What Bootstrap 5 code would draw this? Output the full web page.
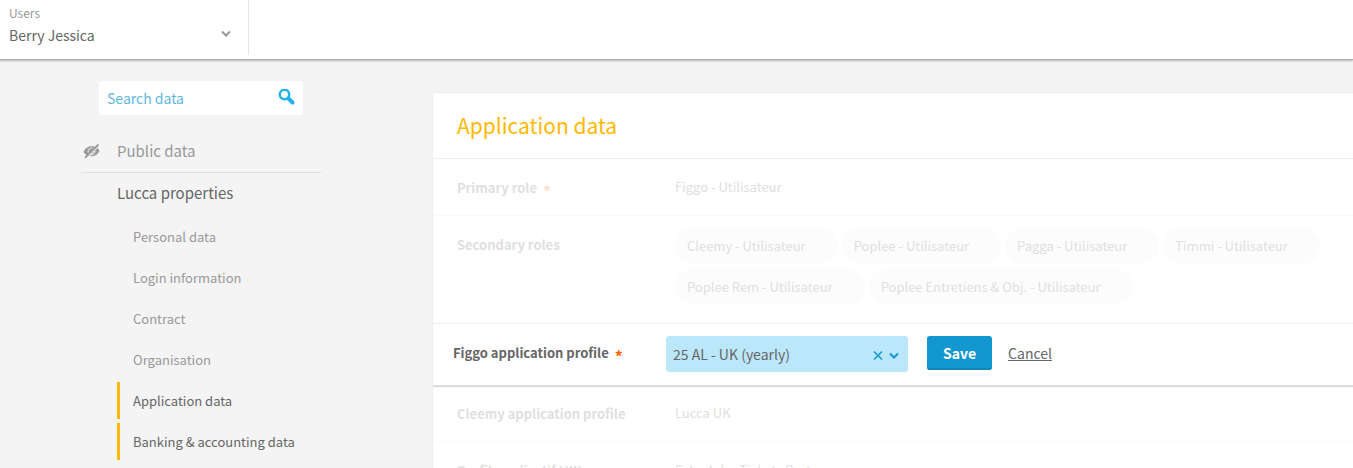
<!DOCTYPE html>
<html lang="en">
<head>
<meta charset="utf-8">
<meta name="viewport" content="width=device-width, initial-scale=1">
<title>Berry Jessica – Application data</title>
<link href="https://cdn.jsdelivr.net/npm/bootstrap@5.3.0/dist/css/bootstrap.min.css" rel="stylesheet">
<style>
  :root { --ink: #666; --muted: #999; --accent: #ffb800; --blue: #1297d1; }
  body { background: #f4f4f4; color: var(--ink); font-family: "Noto Sans CJK JP", "Noto Sans", sans-serif; font-size: 14px; line-height: 20px; overflow: hidden; height: 100vh; }
  .topbar { background: #fff; border-bottom: 1px solid #aaa; box-shadow: 0 1px 2px rgba(0,0,0,.25); height: 60px; }
  .user-pick { width: 249px; height: 55px; border-right: 1px solid #e6e6e6; padding: 3px 16px 0 9px; background: #fff; color: var(--ink); text-align: left; }
  .user-pick .caption { font-size: 12px; color: var(--muted); line-height: 20px; }
  .user-pick .who { line-height: 24px; }
  .sidebar { flex: 0 0 32%; padding: 21px 112px 0 81px; }
  .search-box { background: #fff; border-radius: 3px; height: 34px; margin: 0 18px; padding: 0 8px; }
  .search-box input { border: 0; outline: 0; background: none; min-width: 0; color: var(--ink); padding: 0; }
  .search-box input::placeholder { color: #5db8dd; opacity: 1; }
  .group-link { display: flex; align-items: center; height: 42px; padding: 0 0 2px 36px; font-size: 15px; color: var(--ink); text-decoration: none; }
  .group-link.hidden-group { color: var(--muted); padding-left: 2px; gap: 17px; border-bottom: 1px solid #ddd; }
  .sub-link { display: flex; align-items: center; height: 37px; margin: 0 0 4px 36px; padding-left: 13px; border-left: 3px solid transparent; font-size: 13px; color: var(--muted); text-decoration: none; }
  .sub-list { padding-top: 3px; }
  .sub-link.current { border-color: var(--accent); color: var(--ink); }
  .panel { background: #fff; border: 1px solid #eee; border-right: 0; border-bottom: 0; border-radius: 4px 0 0 0; margin-top: 32px; margin-left: -1px; }
  .panel h1 { color: var(--accent); font-size: 21px; line-height: 32px; padding: 16px 24px 17px; border-bottom: 1px solid #eee; margin: 0; font-weight: 400; }
  .field-row { display: flex; padding: 0 24px; font-size: 13px; border-bottom: 1px solid #fafafa; min-height: 57px; color: #e0e0e0; }
  .field-row dt { flex: 0 0 218px; padding-top: 19px; }
  .field-row dd { margin: 0; padding-top: 18px; }
  .req { display: inline-block; font-size: 16px; line-height: 16px; height: 12px; vertical-align: middle; margin-left: 3px; color: #ff6400; }
  .field-row dt .req { color: #ffdfcc; }
  .pills { display: flex; flex-wrap: wrap; gap: 5px 4px; padding-bottom: 18px; }
  .pill { background: #fcfcfc; border-radius: 18px; height: 36px; line-height: 36px; padding: 0 32px 0 12px; }
  .edit-row { display: flex; align-items: flex-start; height: 62px; padding: 12px 20px 0; border-top: 1px solid #eee; box-shadow: 0 2px 1px #ddd; position: relative; }
  .edit-row label { flex: 0 0 213px; font-size: 13px; font-weight: 700; padding-top: 7px; }
  .combo { width: 242px; height: 36px; background: #bbe7fb; border-radius: 3px; padding: 0 8px 0 7px; }
  .combo input { border: 0; outline: 0; background: none; min-width: 0; padding: 0; color: var(--ink); }
  .bare { border: 0; background: none; padding: 0; display: flex; }
  .btn-save { background: var(--blue); color: #fff; border: 0; border-radius: 3px; box-shadow: inset 0 -2px #0f88bd; font-size: 14px; font-weight: 700; line-height: 20px; padding: 7px 16px; margin-left: 19px; }
  .cancel { color: var(--ink); margin: 7px 0 0 16px; }
</style>
</head>
<body>
<header class="topbar">
  <button class="user-pick d-flex justify-content-between border-top-0 border-start-0 border-bottom-0" type="button">
    <span><span class="caption d-block">Users</span><span class="who d-block">Berry Jessica</span></span>
    <svg class="mt-4" width="12" height="14" viewBox="0 0 12 14" fill="none" stroke="#999" stroke-width="2" aria-hidden="true"><path d="M2 4.500l4 4 4-4"/></svg>
  </button>
</header>
<div class="d-flex">
  <nav class="sidebar" aria-label="Data sections">
    <div class="search-box d-flex align-items-center">
      <input class="flex-grow-1" type="text" placeholder="Search data" aria-label="Search data">
      <button class="bare" type="button" aria-label="Search">
        <svg width="18" height="18" viewBox="0 0 18 18" fill="none" stroke="#22b2f0" aria-hidden="true"><circle cx="7.500" cy="5.500" r="4.700" stroke-width="2.500"/><path d="M11.500 9.500l4 4" stroke-width="4" stroke-linecap="round"/></svg>
      </button>
    </div>
    <a class="group-link hidden-group mt-3" href="#">
      <svg width="17" height="16" viewBox="0 0 17 16" fill="none" stroke="#999" aria-hidden="true"><path d="M.5 9C3 1.500 13.500 1.500 16.500 7.500 14 15 3.500 15 .5 9z" fill="#999" stroke="none"/><path d="M5.200 9.500c-.5-3 1.500-4.800 4-4.500M11.800 7.500c.3 2.500-1.500 4.300-3.800 4.200" stroke="#f4f4f4" stroke-width="1"/><path d="M3.500 14.800L14.500 2.800" stroke="#f4f4f4" stroke-width="2.600"/><path d="M2 14.800L15.500 1.500" stroke-width="1.800"/></svg>
      Public data
    </a>
    <a class="group-link" href="#">Lucca properties</a>
    <div class="sub-list">
      <a class="sub-link" href="#">Personal data</a>
      <a class="sub-link" href="#">Login information</a>
      <a class="sub-link" href="#">Contract</a>
      <a class="sub-link" href="#">Organisation</a>
      <a class="sub-link current" href="#">Application data</a>
      <a class="sub-link current" href="#">Banking &amp; accounting data</a>
    </div>
  </nav>
  <main class="panel flex-grow-1">
    <h1>Application data</h1>
    <dl class="m-0">
      <div class="field-row"><dt>Primary role <span class="req">*</span></dt><dd>Figgo - Utilisateur</dd></div>
      <div class="field-row border-bottom-0">
        <dt>Secondary roles</dt>
        <dd class="pills pt-2 mt-1">
          <span class="pill">Cleemy - Utilisateur</span><span class="pill">Poplee - Utilisateur</span><span class="pill">Pagga - Utilisateur</span><span class="pill">Timmi - Utilisateur</span><span class="pill">Poplee Rem - Utilisateur</span><span class="pill">Poplee Entretiens &amp; Obj. - Utilisateur</span>
        </dd>
      </div>
    </dl>
    <form class="edit-row">
      <label for="profile">Figgo application profile <span class="req">*</span></label>
      <div class="combo d-flex align-items-center">
        <input id="profile" class="flex-grow-1" type="text" value="25 AL - UK (yearly)">
        <button class="bare" type="button" aria-label="Clear"><svg width="12" height="12" viewBox="0 0 12 12" fill="none" stroke="#1297d1" stroke-width="1.500"><path d="M2 3.500l8 8M10 3.500l-8 8"/></svg></button>
        <button class="bare ms-1" type="button" aria-label="Open list"><svg width="12" height="12" viewBox="0 0 12 12" fill="none" stroke="#1297d1" stroke-width="2"><path d="M2 5.500l4 4 4-4"/></svg></button>
      </div>
      <button class="btn-save" type="submit">Save</button>
      <a class="cancel" href="#">Cancel</a>
    </form>
    <dl class="m-0">
      <div class="field-row"><dt>Cleemy application profile</dt><dd>Lucca UK</dd></div>
      <div class="field-row"><dt>Profil applicatif UKI</dt><dd>Scheduler Tickets Rest</dd></div>
    </dl>
  </main>
</div>
<script src="https://cdn.jsdelivr.net/npm/bootstrap@5.3.0/dist/js/bootstrap.bundle.min.js"></script>
</body>
</html>
